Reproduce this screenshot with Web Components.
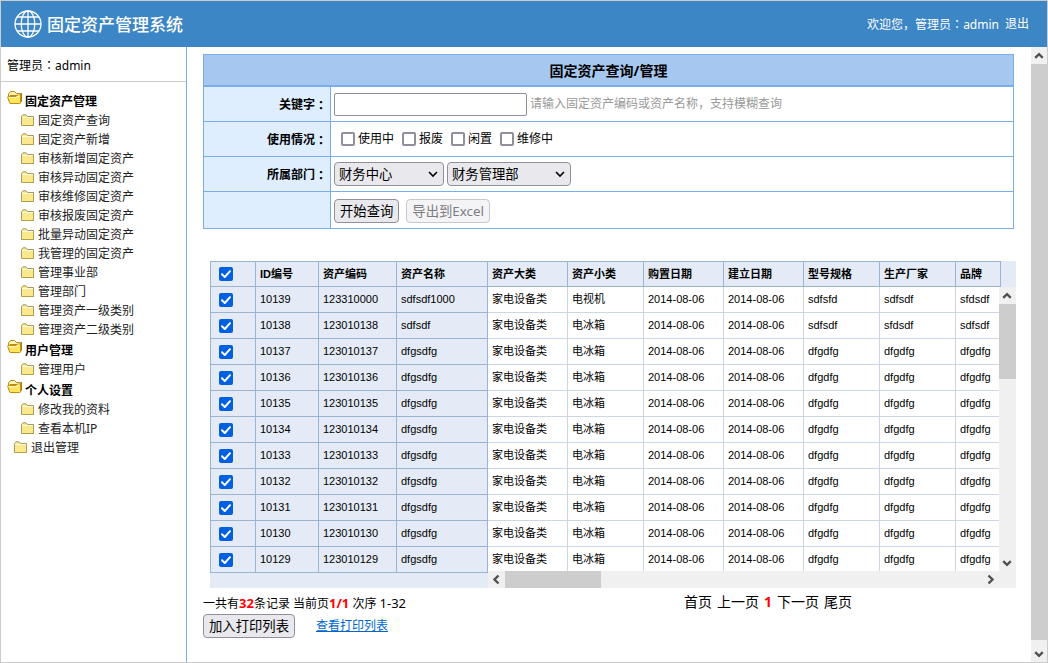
<!DOCTYPE html>
<html lang="zh-CN">
<head>
<meta charset="utf-8">
<title>固定资产管理系统</title>
<style>
:root{--line:#7aaeeb;--rule:#ccc;--font:"Noto Sans","Noto Sans CJK SC",sans-serif;}
*{box-sizing:border-box}
body{margin:0;font-family:var(--font);font-size:12px;line-height:18px;color:#000;background:#fff}
</style>
</head>
<body>
<app-shell>
  <app-header slot="header" user="admin">固定资产管理系统</app-header>
  <side-nav slot="nav" user="admin">
    <nav-group label="固定资产管理">
      <nav-item>固定资产查询</nav-item>
      <nav-item>固定资产新增</nav-item>
      <nav-item>审核新增固定资产</nav-item>
      <nav-item>审核异动固定资产</nav-item>
      <nav-item>审核维修固定资产</nav-item>
      <nav-item>审核报废固定资产</nav-item>
      <nav-item>批量异动固定资产</nav-item>
      <nav-item>我管理的固定资产</nav-item>
      <nav-item>管理事业部</nav-item>
      <nav-item>管理部门</nav-item>
      <nav-item>管理资产一级类别</nav-item>
      <nav-item>管理资产二级类别</nav-item>
    </nav-group>
    <nav-group label="用户管理">
      <nav-item>管理用户</nav-item>
    </nav-group>
    <nav-group label="个人设置">
      <nav-item>修改我的资料</nav-item>
      <nav-item>查看本机IP</nav-item>
    </nav-group>
    <nav-item top>退出管理</nav-item>
  </side-nav>
  <query-form>固定资产查询/管理</query-form>
  <asset-grid></asset-grid>
  <record-footer total="32" page="1/1" range="1-32"></record-footer>
</app-shell>

<script>
const define = (name, render, after) => customElements.define(name, class extends HTMLElement {
  connectedCallback() {
    if (this.shadowRoot) return;
    this.attachShadow({ mode: 'open' }).innerHTML =
      '<style>*{box-sizing:border-box}.jp{font-family:"Noto Sans CJK JP",sans-serif}</style>' + render(this);
    if (after) after(this.shadowRoot, this);
  }
});

const COLON = '<span class="jp" lang="ja">：</span>';
const CONTROLS = `
  button{font-family:var(--font);height:24px;padding:0 5px;border:1px solid #8f8f9d;border-radius:4px;background:#e9e9ed;color:#000;line-height:20px;white-space:nowrap}
  button:disabled{color:#7c7c80;background:#f4f4f6;border-color:#c7c7ce}`;
const CHECK = `
  input[type=checkbox]{appearance:none;width:14px;height:14px;margin:0;border:2px solid #8f8f9d;border-radius:2px;background:#fff;flex:none}
  input[type=checkbox]:checked{border:0;background:#0060df url("data:image/svg+xml,%3Csvg xmlns='http://www.w3.org/2000/svg' viewBox='0 0 14 14'%3E%3Cpath d='M3 7.2L5.8 10L11 4.2' fill='none' stroke='white' stroke-width='2' stroke-linecap='round' stroke-linejoin='round'/%3E%3C/svg%3E")}`;

define('app-shell', () => `
  <style>
    :host{display:flex;flex-direction:column;min-height:100vh;border:1px solid var(--rule)}
    .body{flex:1;display:grid;grid-template-columns:186px minmax(0,1fr) 16px}
    main{padding:7px 17px 0 16px}
  </style>
  <slot name="header"></slot>
  <div class="body"><slot name="nav"></slot><main><slot></slot></main><scroll-bar class="page"></scroll-bar></div>`);

define('scroll-bar', el => {
  const h = el.hasAttribute('horizontal');
  const arrow = (d) => `<svg width="${h ? 17 : 16}" height="17" viewBox="0 0 17 17" preserveAspectRatio="xMidYMax" fill="none" stroke="#505050" stroke-width="2.4"><path d="${d}"/></svg>`;
  return `
  <style>
    :host{display:flex;flex-direction:${h ? 'row' : 'column'};background:#f0f0f0;min-height:0}
    svg{flex:none;display:block}
    .track{flex:1;display:flex;flex-direction:inherit}
    .thumb{background:#cdcdcd;flex:0 0 ${el.getAttribute('thumb') || '100%'}}
    :host(.page) svg:last-child{height:22px}
  </style>
  ${arrow(h ? 'M10.5 4.5L6.5 8.5L10.5 12.5' : 'M4.5 10.5L8.5 6.5L12.5 10.5')}
  <div class="track"><div class="thumb"></div></div>
  ${arrow(h ? 'M6.5 4.5L10.5 8.5L6.5 12.5' : 'M4.5 6.5L8.5 10.5L12.5 6.5')}`;
});

define('app-header', el => `
  <style>
    :host{display:flex;align-items:center;height:46px;padding:0 18px 0 13px;background:#3c86c5;color:#fff}
    h1{flex:1;margin:0 0 0 5px;padding-top:2px;font-size:17px;line-height:24px;font-weight:500}
    svg{flex:none}
    a{color:inherit;text-decoration:none;margin-left:6px}
  </style>
  <svg width="28" height="28" viewBox="0 0 28 28" fill="none" stroke="#fff" stroke-width="1.3">
    <circle cx="14" cy="14" r="13"/><ellipse cx="14" cy="14" rx="6.8" ry="13"/>
    <path d="M14 1V27M1 14H27M3.4 7H24.6M3.4 21H24.6"/>
  </svg>
  <h1><slot></slot></h1>
  <span>欢迎您，管理员${COLON}${el.getAttribute('user')}</span>
  <a href="#logout">退出</a>`);

define('side-nav', el => `
  <style>
    :host{display:block;border-right:1px solid var(--line)}
    .user{height:35px;padding:9px 6px 0;border-bottom:1px solid var(--rule)}
    nav{padding-top:8px}
  </style>
  <div class="user">管理员${COLON}${el.getAttribute('user')}</div>
  <nav><slot></slot></nav>`);

define('nav-group', el => `
  <style>
    :host{display:block}
    .head{display:flex;height:21px;padding-left:6px;gap:2px;font-weight:bold}
    .head span{align-self:flex-end}
    svg{flex:none;display:block}
  </style>
  <div class="head">
    <svg width="16" height="16" viewBox="0 0 16 16">
      <path d="M1.5 10.5V4L3.5 1.5H7.5L9.5 3.5H13.5V5.5H3Z" fill="#fff6b8" stroke="#b98a14"/>
      <path d="M14.5 3V11.5L12.5 13.5" fill="none" stroke="#a87a10"/>
      <path d="M3 13.5L.7 7.5Q.5 6.5 1.5 6.5H9L10.5 5H13.5V12.5Q13.5 13.5 12.5 13.5Z" fill="#ffe45c" stroke="#c48f10"/>
      <path d="M2 7.5H9.5L11 6H12.5" stroke="#fffbd5" fill="none"/>
    </svg>
    <span>${el.getAttribute('label')}</span>
  </div>
  <slot></slot>`);

define('nav-item', () => `
  <style>
    :host{display:block;padding-left:20px}
    :host([top]){padding-left:13px}
    a{display:flex;align-items:center;gap:3px;height:19px;color:#222;text-decoration:none}
    svg{flex:none}
  </style>
  <a href="#"><svg width="14" height="14" viewBox="0 0 14 14">
    <path d="M.5 11.5V2.5L2 .8H5L6.5 2.5H12.5V11.5Z" fill="#f9e88c" stroke="#a39a68"/>
    <path d="M1 3.5H12" stroke="#fffbdc"/><path d="M1 11.5H12.5V4" stroke="#b5a04a" fill="none"/>
  </svg><span><slot></slot></span></a>`);

define('query-form', () => `
  <style>
    :host{display:block}
    form{border:1px solid var(--line);display:grid;grid-template-columns:127px 1fr;grid-template-rows:32px 35px 35px 35px 36px}
    h2{grid-column:1/3;margin:0;font-size:14px;line-height:20px;background:#a6c7f0;border-bottom:2px solid var(--line);display:flex;align-items:center;justify-content:center;padding-top:2px}
    .name{background:#deeeff;border-right:1px solid var(--line);display:flex;align-items:center;justify-content:flex-end;padding:2px 3px 0 0;font-weight:bold}
    .field{display:flex;align-items:center;padding-left:3px;gap:3px}
    .name,.field{border-bottom:1px solid var(--line)}
    .last{border-bottom:0}
    .checks{padding-left:10px;gap:8px}
    .checks label{display:flex;align-items:center;gap:3px}
    input[type=text]{width:193px;height:23px;border:1px solid #8f8f9d;border-radius:2px;padding:0 4px;font-family:var(--font)}
    .hint{color:#999}
    select{appearance:none;width:110px;height:24px;padding:0 4px;border:1px solid #8f8f9d;border-radius:4px;color:#000;font-family:var(--font);
      background:#e9e9ed url("data:image/svg+xml,%3Csvg xmlns='http://www.w3.org/2000/svg' viewBox='0 0 10 8'%3E%3Cpath d='M1 2L5 6L9 2' fill='none' stroke='black' stroke-width='1.6'/%3E%3C/svg%3E") no-repeat right 5px center/10px 8px}
    select.wide{width:124px}
    .actions{gap:7px;padding-top:1px}
    ${CONTROLS}${CHECK}
  </style>
  <form>
    <h2><slot></slot></h2>
    <label class="name" for="kw">关键字${COLON}</label>
    <div class="field"><input type="text" id="kw"><span class="hint">请输入固定资产编码或资产名称，支持模糊查询</span></div>
    <div class="name">使用情况${COLON}</div>
    <div class="field checks">${['使用中', '报废', '闲置', '维修中'].map(t => `<label><input type="checkbox">${t}</label>`).join('')}</div>
    <label class="name" for="dept">所属部门${COLON}</label>
    <div class="field"><select id="dept"><option>财务中心</option></select><select class="wide" aria-label="部门"><option>财务管理部</option></select></div>
    <div class="name last"></div>
    <div class="field last actions"><button type="button">开始查询</button><button type="button" disabled>导出到Excel</button></div>
  </form>`);

const ROWS = [
  ['10139', '123310000', 'sdfsdf1000', '家电设备类', '电视机', '2014-08-06', '2014-08-06', 'sdfsfd', 'sdfsdf', 'sfdsdf'],
  ['10138', '123010138', 'sdfsdf', '家电设备类', '电冰箱', '2014-08-06', '2014-08-06', 'sdfsdf', 'sfdsdf', 'sdfsdf']
];
for (let id = 10137; id >= 10129; id--)
  ROWS.push([String(id), '1230' + id, 'dfgsdfg', '家电设备类', '电冰箱', '2014-08-06', '2014-08-06', 'dfgdfg', 'dfgdfg', 'dfgdfg']);
const HEADS = ['ID编号', '资产编码', '资产名称', '资产大类', '资产小类', '购置日期', '建立日期', '型号规格', '生产厂家', '品牌'];
const cols = list => '<colgroup>' + list.map(w => `<col style="width:${w}px">`).join('') + '</colgroup>';
const th = list => list.map(t => `<th scope="col">${t}</th>`).join('');
const td = list => list.map(t => `<td>${t}</td>`).join('');
const RIGHT = [80, 76, 80, 80, 76, 76, 45];

define('asset-grid', () => `
  <style>
    :host{--edge:#9ab5d2;display:grid;grid-template-columns:278px minmax(0,1fr);align-items:start;margin:32px -2px 0 7px;background:#e4ebf6;
      font-family:"Liberation Sans","Noto Sans CJK SC",sans-serif;font-size:11px;line-height:16px}
    table{border-collapse:separate;border-spacing:0;table-layout:fixed}
    th,td{height:26px;padding:0 0 0 4px;text-align:left;white-space:nowrap;border-right:1px solid var(--edge);border-bottom:1px solid var(--edge)}
    th{border-top:1px solid var(--edge)}
    td{padding-bottom:1px}
    .frozen{width:278px}
    .frozen th:first-child,.frozen td:first-child{border-left:1px solid var(--edge);padding-left:8px}
    .frozen td:first-child{padding-bottom:0}
    .data{width:513px}
    .body{display:grid;grid-template-columns:minmax(0,1fr) 17px;grid-template-rows:284px 17px}
    .clip{overflow:hidden;background:#fff}
    .clip td{border-color:#ccd7e6}
    .corner{background:#f0f0f0}
    .pane{min-width:0}
    input{display:block}
    ${CHECK}
  </style>
  <table class="frozen">${cols([46, 63, 78, 91])}
    <thead><tr><th><input type="checkbox" checked aria-label="全选"></th>${th(HEADS.slice(0, 3))}</tr></thead>
    <tbody>${ROWS.map(r => `<tr><td><input type="checkbox" checked aria-label="${r[0]}"></td>${td(r.slice(0, 3))}</tr>`).join('')}</tbody>
  </table>
  <div class="pane">
    <table class="data">${cols(RIGHT)}<thead><tr>${th(HEADS.slice(3))}</tr></thead></table>
    <div class="body">
      <div class="clip"><table class="data">${cols(RIGHT)}<tbody>${ROWS.map(r => `<tr>${td(r.slice(3))}</tr>`).join('')}</tbody></table></div>
      <scroll-bar thumb="75px"></scroll-bar>
      <scroll-bar horizontal thumb="96px"></scroll-bar>
      <div class="corner"></div>
    </div>
  </div>`);

define('record-footer', el => `
  <style>
    :host{display:grid;grid-template-columns:1fr 330px;padding-top:4px}
    b{color:#f00;font-size:13px}
    .num{font-size:13px}
    .count{line-height:20px;padding-top:1px}
    .tools{display:flex;align-items:center;gap:21px}
    .tools a{color:#0066cc}
    nav{font-size:14px;line-height:20px;display:flex;gap:5px}
    nav a{color:#000;text-decoration:none}
    nav b{font-size:14px}
    ${CONTROLS}
  </style>
  <div>
    <div class="count">一共有<b>${el.getAttribute('total')}</b>条记录 当前页<b>${el.getAttribute('page')}</b> 次序 <span class="num">${el.getAttribute('range')}</span></div>
    <div class="tools"><button type="button">加入打印列表</button><a href="#print">查看打印列表</a></div>
  </div>
  <nav><a href="#first">首页</a><a href="#prev">上一页</a><b>1</b><a href="#next">下一页</a><a href="#last">尾页</a></nav>`);
</script>
</body>
</html>
